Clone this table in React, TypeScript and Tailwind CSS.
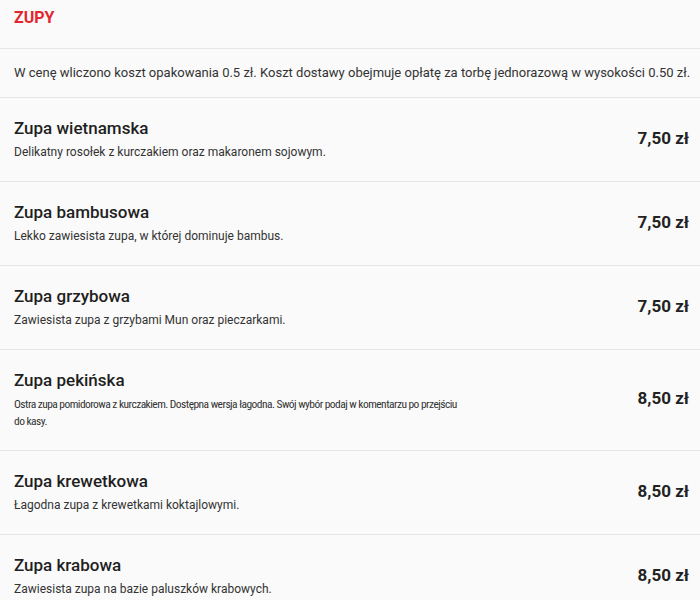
const items = [
  {
    name: "Zupa wietnamska",
    desc: "Delikatny rosołek z kurczakiem oraz makaronem sojowym.",
    price: "7,50 zł",
  },
  {
    name: "Zupa bambusowa",
    desc: "Lekko zawiesista zupa, w której dominuje bambus.",
    price: "7,50 zł",
  },
  {
    name: "Zupa grzybowa",
    desc: "Zawiesista zupa z grzybami Mun oraz pieczarkami.",
    price: "7,50 zł",
  },
  {
    name: "Zupa pekińska",
    desc: "Ostra zupa pomidorowa z kurczakiem. Dostępna wersja łagodna. Swój wybór podaj w komentarzu po przejściu do kasy.",
    price: "8,50 zł",
    narrow: true,
  },
  {
    name: "Zupa krewetkowa",
    desc: "Łagodna zupa z krewetkami koktajlowymi.",
    price: "8,50 zł",
  },
  {
    name: "Zupa krabowa",
    desc: "Zawiesista zupa na bazie paluszków krabowych.",
    price: "8,50 zł",
  },
];

export default function App() {
  return (
    <div className="h-[600px] w-[700px] overflow-hidden bg-[#fafafa] font-['Roboto',sans-serif] text-[#222]">
      <header className="flex h-[49px] items-start border-b border-[#e6e6e6] px-[14px] pt-[6px]">
        <h2 className="text-[16px] font-bold uppercase text-[#e3262f]">Zupy</h2>
      </header>

      <div className="flex h-[49px] items-center border-b border-[#e6e6e6] px-[14px]">
        <p className="whitespace-nowrap text-[13px] text-[#333]">
          W cenę wliczono koszt opakowania 0.5 zł. Koszt dostawy obejmuje opłatę za torbę jednorazową w wysokości 0.50 zł.
        </p>
      </div>

      <ul>
        {items.map((item) => (
          <li
            key={item.name}
            className="flex items-center justify-between border-b border-[#e6e6e6] pt-[18px] pb-5 pl-[14px] pr-[11px]"
          >
            <div className="max-w-[445px]">
              <h3 className="text-[17px] leading-[24px] font-medium text-[#1f1f1f]">{item.name}</h3>
              <p
                className={
                  item.narrow
                    ? "mt-[4px] text-[11.5px] leading-[17px] text-[#333] font-stretch-condensed tracking-[-0.55px]"
                    : "mt-[4px] text-[12px] leading-[17px] text-[#333]"
                }
              >
                {item.desc}
              </p>
            </div>
            <span className="text-[17px] font-bold text-[#222]">{item.price}</span>
          </li>
        ))}
      </ul>
    </div>
  );
}
